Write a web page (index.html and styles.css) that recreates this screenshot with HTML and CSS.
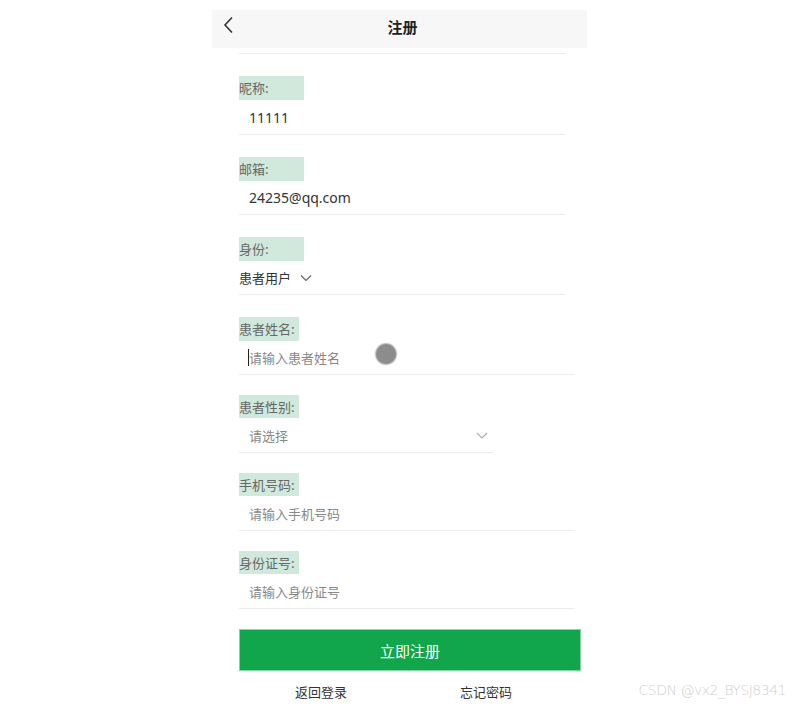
FILE: index.html
```html
<!DOCTYPE html>
<html lang="zh">
<head>
<meta charset="utf-8">
<title>注册</title>
<link rel="stylesheet" href="styles.css">
</head>
<body>
<div class="app">
  <header class="topbar">
    <svg class="back" width="12" height="18" viewBox="0 0 12 18"><path d="M10 1.5 L3 9 L10 16.5" fill="none" stroke="#333" stroke-width="1.6"/></svg>
    <h1 class="title">注册</h1>
  </header>
  <main class="form">
    <div class="rule"></div>

    <div class="field">
      <div class="label">昵称:</div>
      <div class="row row-first">
        <span class="value">11111</span>
      </div>
    </div>

    <div class="field">
      <div class="label">邮箱:</div>
      <div class="row">
        <span class="value">24235@qq.com</span>
      </div>
    </div>

    <div class="field">
      <div class="label">身份:</div>
      <div class="row row-plain">
        <span class="select-text">患者用户</span>
        <svg class="chev" width="12" height="8" viewBox="0 0 12 8"><path d="M1 1.5 L6 6.5 L11 1.5" fill="none" stroke="#666" stroke-width="1.2"/></svg>
      </div>
    </div>

    <div class="field">
      <div class="label label-b">患者姓名:</div>
      <div class="row row-wide">
        <span class="caret"></span><span class="ph">请输入患者姓名</span>
      </div>
    </div>

    <div class="field field-b">
      <div class="label label-b label-short">患者性别:</div>
      <div class="row row-short row-tall">
        <span class="ph">请选择</span>
        <svg class="chev chev-light" width="12" height="7" viewBox="0 0 12 7"><path d="M1 1 L6 6 L11 1" fill="none" stroke="#aaa" stroke-width="1.1"/></svg>
      </div>
    </div>

    <div class="field field-b">
      <div class="label label-b label-short">手机号码:</div>
      <div class="row row-wide row-tall">
        <span class="ph">请输入手机号码</span>
      </div>
    </div>

    <div class="field field-b">
      <div class="label label-b label-short">身份证号:</div>
      <div class="row row-wide row-tall">
        <span class="ph">请输入身份证号</span>
      </div>
    </div>

    <button class="submit">立即注册</button>
    <div class="links">
      <a class="link">返回登录</a>
      <a class="link">忘记密码</a>
    </div>
  </main>
</div>
<div class="touch"></div>
<div class="watermark">CSDN @vx2_BYSJ8341</div>
</body>
</html>
```
FILE: styles.css
```css
html, body {
  margin: 0;
  padding: 0;
  background: #fff;
}
body {
  font-family: "Noto Sans", "Noto Sans CJK SC", sans-serif;
  color: #333;
  position: relative;
  height: 707px;
  overflow: hidden;
}
.app {
  width: 375px;
  margin: 10px 0 0 212px;
}
.topbar {
  height: 38px;
  background: #f7f7f7;
  display: flex;
  align-items: center;
  justify-content: center;
  position: relative;
}
.back {
  position: absolute;
  left: 10px;
  top: 6px;
}
.title {
  margin: 0;
  font-size: 15px;
  line-height: 20px;
  font-weight: bold;
  color: #222;
  font-family: "Noto Sans CJK SC", sans-serif;
  padding: 0 0 5px 6px;
}
.form {
  padding-left: 27px;
}
.rule {
  width: 327px;
  height: 1px;
  background: #ececec;
  margin-top: 5px;
}
.field {
  margin-top: 22px;
}
.field-b {
  margin-top: 20px;
}
.label {
  width: 65px;
  height: 24px;
  line-height: 24px;
  background: #d1e9dd;
  font-size: 13px;
  color: #666;
  font-family: "Noto Sans CJK SC", sans-serif;
}
.label-b {
  width: 60px;
}
.label-short {
  height: 23px;
  line-height: 23px;
}
.row {
  width: 327px;
  height: 34px;
  box-sizing: border-box;
  border-bottom: 1px solid #ececec;
  display: flex;
  align-items: center;
  padding-left: 10px;
}
.row-first {
  height: 35px;
}
.row-tall {
  height: 35px;
}
.row-plain {
  padding-left: 0;
}
.row-wide {
  width: 336px;
}
.row-short {
  width: 254px;
  justify-content: space-between;
  padding-right: 5px;
}
.value {
  font-size: 14px;
  color: #333;
}
.select-text {
  font-size: 13px;
  color: #333;
  font-family: "Noto Sans CJK SC", sans-serif;
}
.chev {
  margin-left: 9px;
}
.chev-light {
  margin-left: 0;
}
.ph {
  font-size: 13px;
  color: #888;
  font-family: "Noto Sans CJK SC", sans-serif;
}
.caret {
  display: inline-block;
  width: 1px;
  height: 17px;
  background: #222;
  margin-left: -1px;
}
.submit {
  display: block;
  margin-top: 20px;
  width: 342px;
  height: 42px;
  background: #12a64c;
  border: 1px solid #7fd6a0;
  color: #fff;
  font-size: 15px;
  font-family: "Noto Sans CJK SC", sans-serif;
  padding: 0;
}
.links {
  display: flex;
  gap: 113px;
  padding-left: 56px;
  height: 40px;
  align-items: center;
}
.link {
  font-size: 13px;
  color: #333;
  font-family: "Noto Sans CJK SC", sans-serif;
}
.touch {
  position: absolute;
  left: 376px;
  top: 344px;
  width: 20px;
  height: 20px;
  border-radius: 50%;
  background: #8c8c8c;
  box-shadow: 0 0 1px 1px rgba(140,140,140,0.6);
}
.watermark {
  position: absolute;
  right: 21px;
  top: 682px;
  font-size: 14px;
  color: #cfcfcf;
  font-family: "DejaVu Sans", sans-serif;
  font-weight: 200;
  letter-spacing: -0.5px;
}
```
